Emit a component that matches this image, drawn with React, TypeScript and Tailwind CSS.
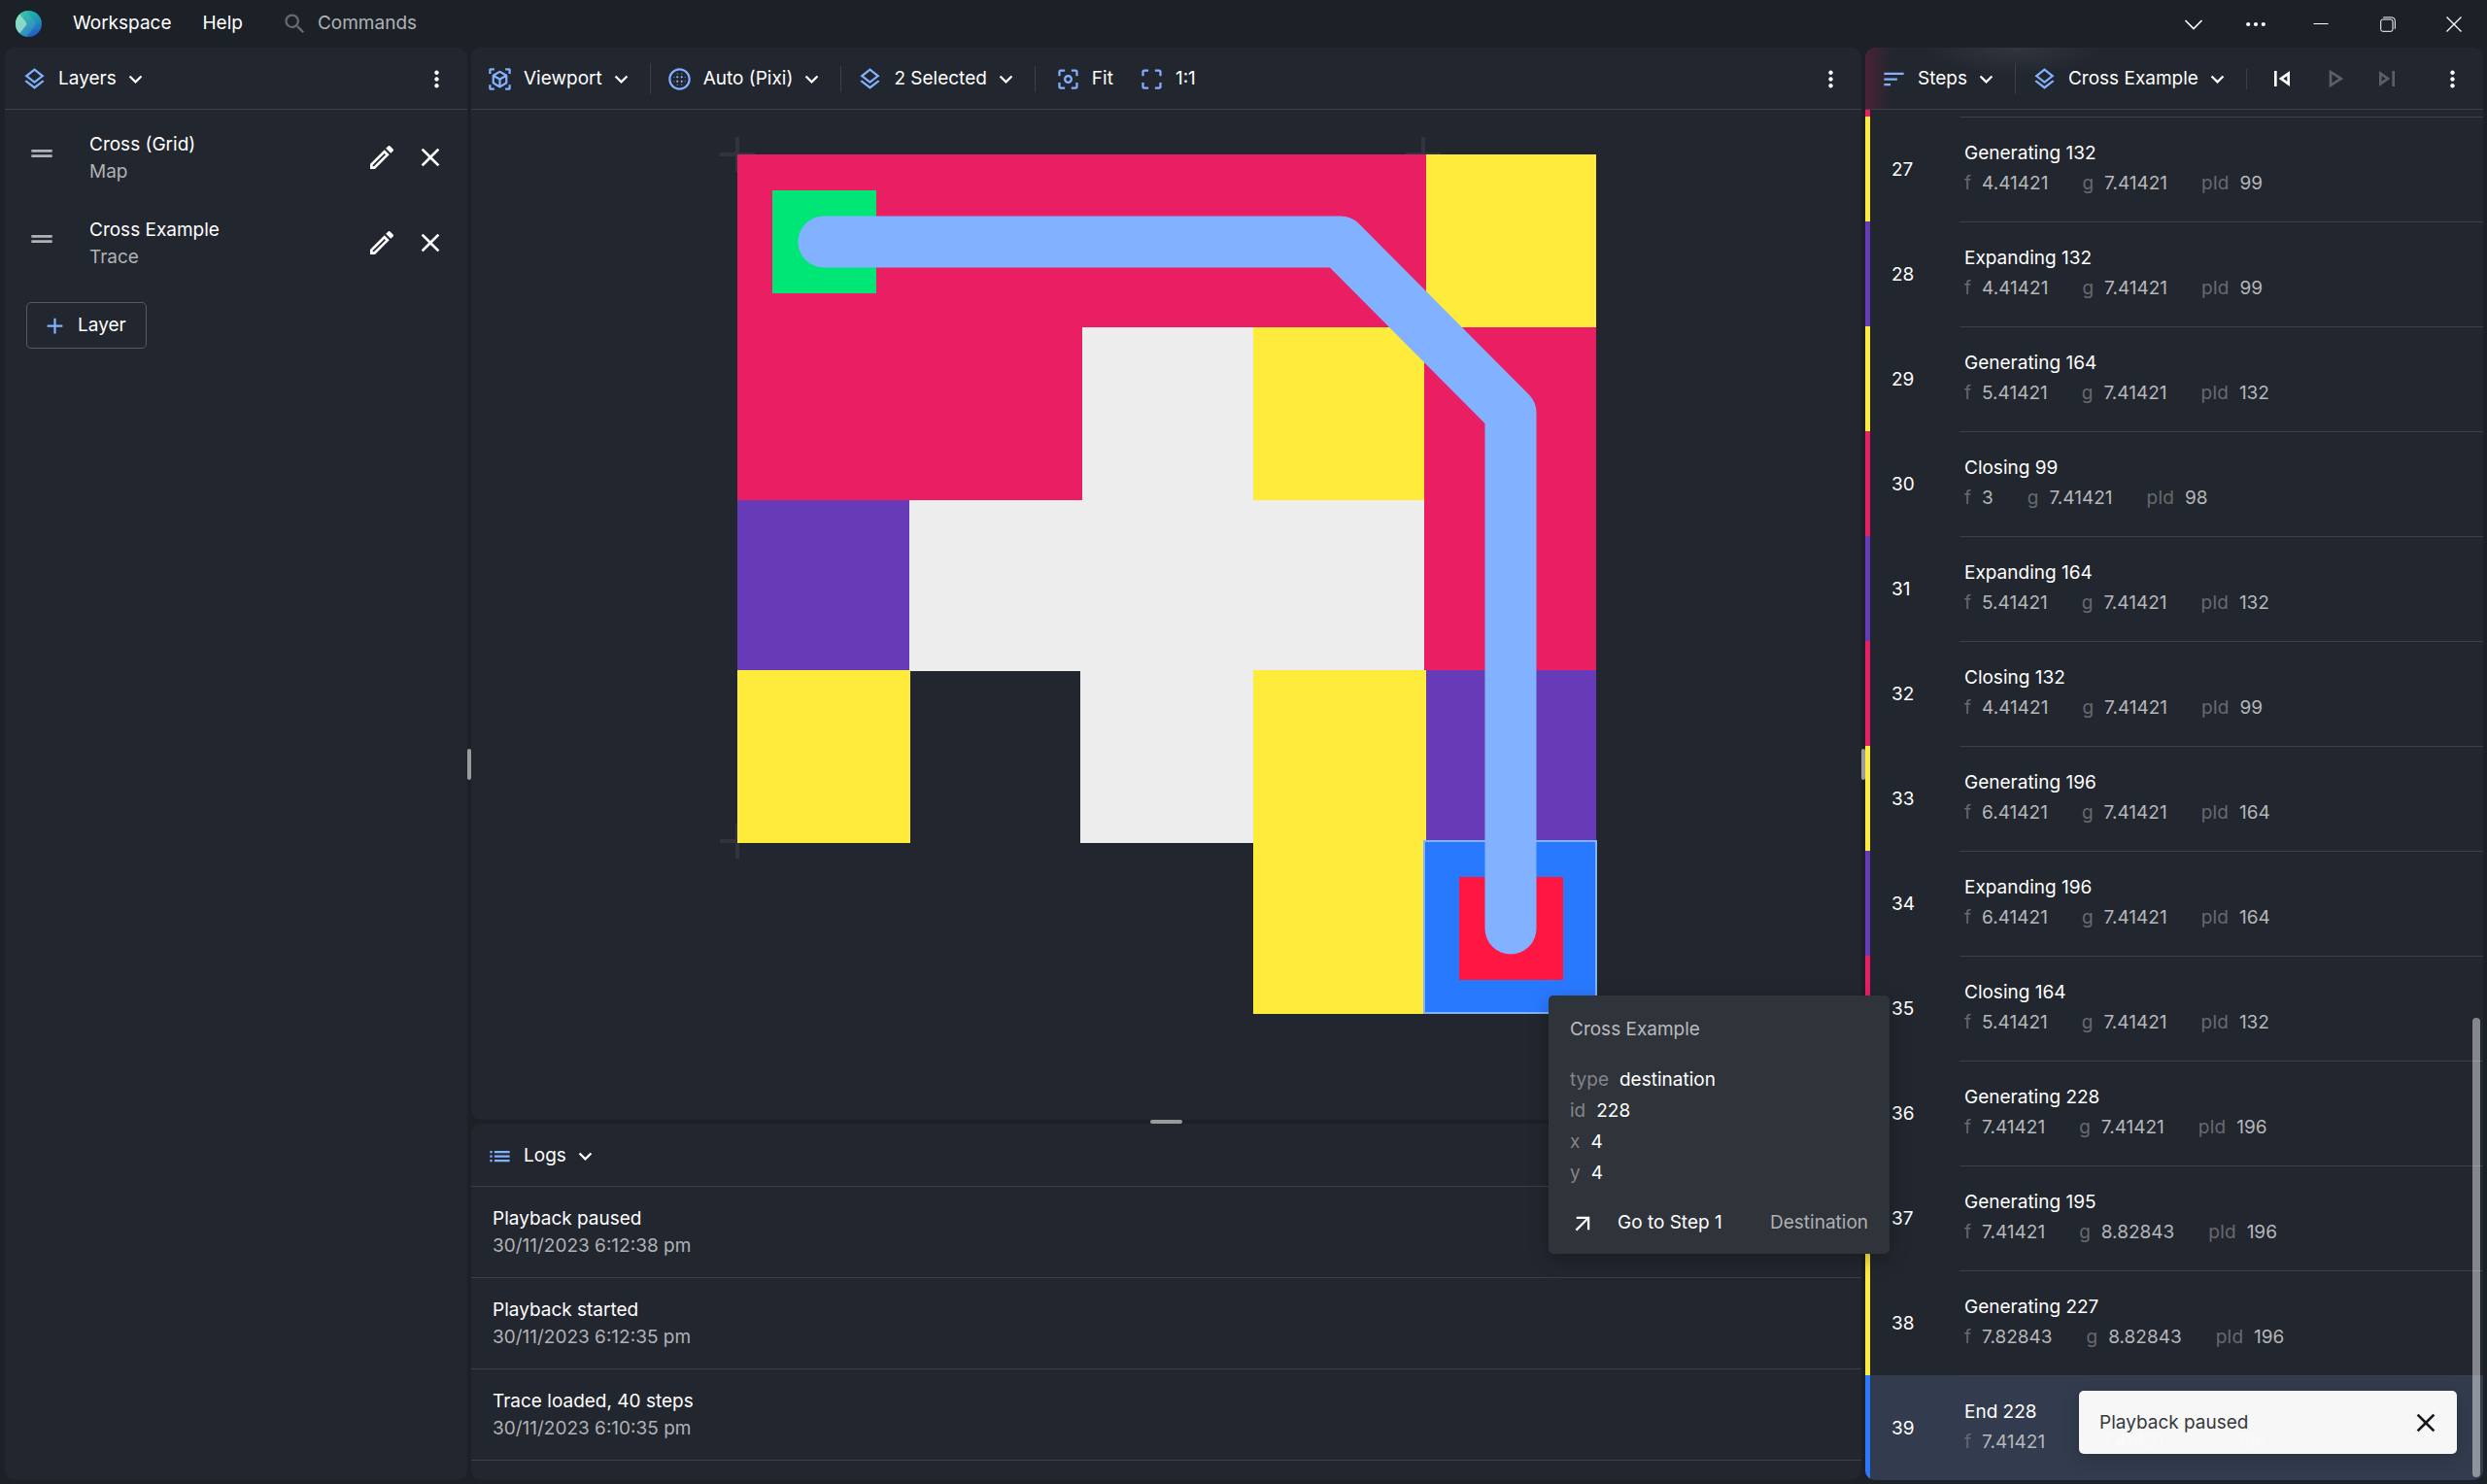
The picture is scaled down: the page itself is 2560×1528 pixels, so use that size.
import type { ReactNode } from "react";
import type { IconType } from "react-icons";
import {
  MdAdd,
  MdArrowOutward,
  MdBlurCircular,
  MdCenterFocusWeak,
  MdClose,
  MdCropFree,
  MdDragHandle,
  MdExpandMore,
  MdList,
  MdMoreVert,
  MdOutlineEdit,
  MdOutlineLayers,
  MdOutlinePlayArrow,
  MdOutlineSkipNext,
  MdOutlineSkipPrevious,
  MdSearch,
  MdSort,
  MdViewInAr,
} from "react-icons/md";

type Step = { n: number; title: string; f: string; g: string; pId: string; bar: string };

const YELLOW = "bg-[#ffeb3b]";
const PURPLE = "bg-[#673ab7]";
const PINK = "bg-[#e91e63]";
const BLUE = "bg-[#2979ff]";

const steps: Step[] = [
  { n: 27, title: "Generating 132", f: "4.41421", g: "7.41421", pId: "99", bar: YELLOW },
  { n: 28, title: "Expanding 132", f: "4.41421", g: "7.41421", pId: "99", bar: PURPLE },
  { n: 29, title: "Generating 164", f: "5.41421", g: "7.41421", pId: "132", bar: YELLOW },
  { n: 30, title: "Closing 99", f: "3", g: "7.41421", pId: "98", bar: PINK },
  { n: 31, title: "Expanding 164", f: "5.41421", g: "7.41421", pId: "132", bar: PURPLE },
  { n: 32, title: "Closing 132", f: "4.41421", g: "7.41421", pId: "99", bar: PINK },
  { n: 33, title: "Generating 196", f: "6.41421", g: "7.41421", pId: "164", bar: YELLOW },
  { n: 34, title: "Expanding 196", f: "6.41421", g: "7.41421", pId: "164", bar: PURPLE },
  { n: 35, title: "Closing 164", f: "5.41421", g: "7.41421", pId: "132", bar: PINK },
  { n: 36, title: "Generating 228", f: "7.41421", g: "7.41421", pId: "196", bar: YELLOW },
  { n: 37, title: "Generating 195", f: "7.41421", g: "8.82843", pId: "196", bar: YELLOW },
  { n: 38, title: "Generating 227", f: "7.82843", g: "8.82843", pId: "196", bar: YELLOW },
  { n: 39, title: "End 228", f: "7.41421", g: "7.41421", pId: "196", bar: BLUE },
];

const logs = [
  { title: "Playback paused", time: "30/11/2023 6:12:38 pm" },
  { title: "Playback started", time: "30/11/2023 6:12:35 pm" },
  { title: "Trace loaded, 40 steps", time: "30/11/2023 6:10:35 pm" },
];

const layers = [
  { name: "Cross (Grid)", kind: "Map" },
  { name: "Cross Example", kind: "Trace" },
];

function Logo() {
  return (
    <svg viewBox="0 0 27 27" className="size-[27px]" aria-hidden="true">
      <defs>
        <linearGradient id="logo-base" x1="0.4" y1="0" x2="0.8" y2="1">
          <stop offset="0" stopColor="#16c2a3" />
          <stop offset="0.5" stopColor="#1f8fb8" />
          <stop offset="1" stopColor="#2454c8" />
        </linearGradient>
        <linearGradient id="logo-mid" x1="0" y1="0" x2="0.6" y2="1">
          <stop offset="0" stopColor="#3fd0a6" />
          <stop offset="1" stopColor="#2f86c4" />
        </linearGradient>
        <linearGradient id="logo-front" x1="0" y1="0" x2="0.3" y2="1">
          <stop offset="0" stopColor="#86e2b4" />
          <stop offset="1" stopColor="#8fd0d0" />
        </linearGradient>
        <clipPath id="logo-clip">
          <circle cx="13.5" cy="13.5" r="13.5" />
        </clipPath>
      </defs>
      <g clipPath="url(#logo-clip)">
        <rect width="27" height="27" fill="url(#logo-base)" />
        <path d="M0 0H11L19.5 10.5Q21.5 13.5 19.5 16.5L11 27H0Z" fill="url(#logo-mid)" />
        <path d="M0 0L3 2L10.5 11.5Q12 13.5 10.5 15.5L3 25L0 27Z" fill="url(#logo-front)" />
      </g>
    </svg>
  );
}

function IconButton({ icon: Icon, label, dim, size = "lg" }: { icon: IconType; label: string; dim?: boolean; size?: "sm" | "lg" }) {
  return (
    <button type="button" aria-label={label} className={dim ? "text-[#5c5f65]" : "text-white"}>
      <Icon className={size === "lg" ? "size-8" : "size-[27px]"} />
    </button>
  );
}

function HeaderButton({ icon: Icon, children, menu }: { icon: IconType; children: ReactNode; menu?: boolean }) {
  return (
    <button type="button" className="flex items-center whitespace-nowrap">
      <Icon className="mr-[11px] size-[27px] text-[#82b1ff]" />
      {children}
      {menu && <MdExpandMore className="ml-[6px] size-[27px]" />}
    </button>
  );
}

function Divider({ className }: { className: string }) {
  return <span className={`w-px bg-[#3b3f46] ${className}`} />;
}

function PanelHeader({ children, className = "" }: { children: ReactNode; className?: string }) {
  return (
    <header className={`flex h-16 shrink-0 items-center border-b border-[#3b3f46] pl-4 pr-[18px] pt-px ${className}`}>{children}</header>
  );
}

function Panel({ children, className = "", label }: { children: ReactNode; className?: string; label: string }) {
  return (
    <section aria-label={label} className={`flex min-h-0 min-w-0 flex-col overflow-hidden rounded-[10px] bg-[#22262e] ${className}`}>
      {children}
    </section>
  );
}

function Field({ name, value }: { name: string; value: string }) {
  return (
    <span className="flex gap-[11px]">
      <span className="text-[#66696e]">{name}</span>
      <span className="text-[#b5b7ba]">{value}</span>
    </span>
  );
}

function TitleBar() {
  return (
    <header className="flex h-12 shrink-0 items-center pl-4 pt-px">
      <Logo />
      <nav className="ml-8 flex gap-8">
        <button type="button">Workspace</button>
        <button type="button">Help</button>
      </nav>
      <button type="button" className="ml-10 flex items-center gap-[10px] text-[#b0b2b5]">
        <MdSearch className="size-[27px] text-[#686b70]" />
        Commands
      </button>
      <div className="ml-auto flex items-center">
        <button type="button" aria-label="Show more" className="flex w-16 justify-center">
          <svg viewBox="0 0 20 12" className="h-3 w-5 fill-none stroke-white stroke-[1.6]">
            <path d="M1.5 2L10 10.5L18.5 2" />
          </svg>
        </button>
        <button type="button" aria-label="Options" className="flex w-16 justify-center">
          <svg viewBox="0 0 20 6" className="h-[6px] w-5 fill-white">
            <circle cx="2.2" cy="3" r="2.1" />
            <circle cx="10" cy="3" r="2.1" />
            <circle cx="17.8" cy="3" r="2.1" />
          </svg>
        </button>
        <button type="button" aria-label="Minimise" className="flex w-[70px] justify-center">
          <svg viewBox="0 0 16 16" className="size-4 stroke-white">
            <path d="M0.5 7.5H15.5" />
          </svg>
        </button>
        <button type="button" aria-label="Restore" className="flex w-[68px] justify-center">
          <svg viewBox="0 0 16 16" className="size-4 fill-none stroke-white">
            <rect x="0.7" y="3" width="12.3" height="12.3" rx="2" />
            <path d="M3.2 0.9H12Q15.3 0.9 15.3 4.2V12.8" />
          </svg>
        </button>
        <button type="button" aria-label="Close" className="flex w-[68px] justify-center">
          <svg viewBox="0 0 16 16" className="size-4 stroke-white stroke-[1.3]">
            <path d="M0.5 0.5L15.5 15.5M15.5 0.5L0.5 15.5" />
          </svg>
        </button>
      </div>
    </header>
  );
}

function LayersPanel() {
  return (
    <Panel label="Layers">
      <PanelHeader className="pl-[17px]">
        <HeaderButton icon={MdOutlineLayers} menu>
          Layers
        </HeaderButton>
        <div className="ml-auto flex">
          <IconButton icon={MdMoreVert} label="Layers menu" size="sm" />
        </div>
      </PanelHeader>
      <ul className="pt-[5px]">
        {layers.map((l) => (
          <li key={l.name} className="flex h-[88px] items-center px-[22px]">
            <MdDragHandle className="mb-2 size-8 text-[#b0b2b5]" />
            <div className="ml-[33px] pt-[2px] leading-7">
              <div>{l.name}</div>
              <div className="text-[#b0b2b5]">{l.kind}</div>
            </div>
            <div className="ml-auto flex gap-[18px]">
              <IconButton icon={MdOutlineEdit} label={`Edit ${l.name}`} />
              <IconButton icon={MdClose} label={`Remove ${l.name}`} />
            </div>
          </li>
        ))}
      </ul>
      <button type="button" className="ml-[22px] mt-[17px] flex h-12 w-[124px] items-center gap-[10px] rounded-[5px] border border-[#565a60] pl-[15px]">
        <MdAdd className="size-[27px] text-[#82b1ff]" />
        Layer
      </button>
    </Panel>
  );
}

function Scene() {
  return (
    <svg viewBox="485 113 1431 1040" className="block size-full" role="img" aria-label="Grid with path">
      <g className="stroke-[#31343c]" strokeWidth="4">
        <path d="M759 141V177M741 159H777" />
        <path d="M1465 141V177M1447 159H1483" />
        <path d="M759 848V884M741 866H777" />
      </g>
      <g fill="#ededed">
        <rect x="1114" y="337" width="177" height="178" />
        <rect x="936" y="515" width="530" height="176" />
        <rect x="1112" y="690" width="178" height="178" />
      </g>
      <g fill="#e91e63">
        <rect x="759" y="159" width="709" height="178" />
        <rect x="759" y="336" width="355" height="179" />
        <rect x="1466" y="337" width="177" height="354" />
      </g>
      <g fill="#673ab7">
        <rect x="759" y="515" width="177" height="176" />
        <rect x="1467" y="690" width="176" height="178" />
      </g>
      <g fill="#ffeb3b">
        <rect x="1468" y="159" width="175" height="178" />
        <rect x="1290" y="337" width="176" height="178" />
        <rect x="759" y="690" width="178" height="178" />
        <rect x="1290" y="690" width="178" height="354" />
      </g>
      <rect x="795" y="196" width="107" height="106" fill="#00e676" />
      <rect x="1466" y="866" width="177" height="177" fill="#2979ff" stroke="#82b1ff" strokeWidth="2" />
      <rect x="1502" y="903" width="107" height="106" fill="#ff1744" />
      <path d="M848 249H1380L1555 425V956" fill="none" stroke="#82b1ff" strokeWidth="53" strokeLinecap="round" strokeLinejoin="round" />
    </svg>
  );
}

function ViewportPanel() {
  return (
    <Panel label="Viewport" className="flex-1">
      <PanelHeader>
        <HeaderButton icon={MdViewInAr} menu>
          Viewport
        </HeaderButton>
        <Divider className="mx-4 h-8" />
        <HeaderButton icon={MdBlurCircular} menu>
          Auto (Pixi)
        </HeaderButton>
        <Divider className="mx-4 h-[27px]" />
        <HeaderButton icon={MdOutlineLayers} menu>
          2 Selected
        </HeaderButton>
        <Divider className="ml-4 mr-5 h-[27px]" />
        <HeaderButton icon={MdCenterFocusWeak}>Fit</HeaderButton>
        <span className="w-[26px]" />
        <HeaderButton icon={MdCropFree}>1:1</HeaderButton>
        <div className="ml-auto flex">
          <IconButton icon={MdMoreVert} label="Viewport menu" size="sm" />
        </div>
      </PanelHeader>
      <div className="min-h-0 flex-1">
        <Scene />
      </div>
    </Panel>
  );
}

function LogsPanel() {
  return (
    <Panel label="Logs" className="h-[367px] shrink-0 pt-px">
      <PanelHeader>
        <HeaderButton icon={MdList} menu>
          Logs
        </HeaderButton>
      </PanelHeader>
      <ul>
        {logs.map((l) => (
          <li key={l.time} className="flex h-[94px] flex-col justify-center border-b border-[#3b3f46] px-[22px] leading-7">
            <div>{l.title}</div>
            <div className="text-[#b0b2b5]">{l.time}</div>
          </li>
        ))}
      </ul>
    </Panel>
  );
}

function StepRow({ step, active }: { step: Step; active: boolean }) {
  return (
    <li className={active ? "flex h-[108px] shrink-0 bg-[#323c4e]" : "flex h-[108px] shrink-0"}>
      <span className={`w-[5px] ${step.bar}`} />
      <span className="flex w-[92px] items-center pl-[22px] pt-[2px]">{step.n}</span>
      <div className="flex flex-1 flex-col justify-center gap-[3px] border-t border-[#3b3f46] pb-[3px] pl-[5px] leading-7">
        <div>{step.title}</div>
        <div className="flex gap-[35px]">
          <Field name="f" value={step.f} />
          <Field name="g" value={step.g} />
          <Field name="pId" value={step.pId} />
        </div>
      </div>
    </li>
  );
}

function StepsPanel() {
  return (
    <Panel label="Steps" className="relative">
      <PanelHeader className="bg-[radial-gradient(ellipse_90px_28px_at_155px_0px,#31353d,transparent),linear-gradient(90deg,#4a2238,#22262e_28px)]">
        <HeaderButton icon={MdSort} menu>
          Steps
        </HeaderButton>
        <Divider className="mx-4 h-8" />
        <HeaderButton icon={MdOutlineLayers} menu>
          Cross Example
        </HeaderButton>
        <Divider className="mx-4 h-[21px]" />
        <div className="ml-1 flex gap-[22px]">
          <IconButton icon={MdOutlineSkipPrevious} label="Previous step" />
          <IconButton icon={MdOutlinePlayArrow} label="Play" dim />
          <IconButton icon={MdOutlineSkipNext} label="Next step" dim />
        </div>
        <div className="ml-auto flex">
          <IconButton icon={MdMoreVert} label="Steps menu" size="sm" />
        </div>
      </PanelHeader>
      <ul className="flex min-h-0 flex-1 flex-col">
        <li className="flex flex-1">
          <span className="w-[5px] bg-[#e91e63]" />
        </li>
        {steps.map((s) => (
          <StepRow key={s.n} step={s} active={s.n === 39} />
        ))}
      </ul>
      <div className="absolute bottom-[3px] right-[3px] h-[473px] w-2 rounded-full bg-white/45" />
    </Panel>
  );
}

function TooltipRow({ name, value }: { name: string; value: string }) {
  return (
    <div className="flex gap-[11px] leading-8">
      <dt className="text-[#82858a]">{name}</dt>
      <dd>{value}</dd>
    </div>
  );
}

function CellTooltip() {
  return (
    <div
      role="tooltip"
      className="absolute left-[1594px] top-[1025px] flex h-[266px] w-[351px] flex-col rounded-[5px] bg-[#2f333a] px-[22px] pt-[19px] shadow-[0_6px_20px_rgba(0,0,0,0.25)]"
    >
      <div className="leading-8 text-[#b9bbbe]">Cross Example</div>
      <dl className="mt-5">
        <TooltipRow name="type" value="destination" />
        <TooltipRow name="id" value="228" />
        <TooltipRow name="x" value="4" />
        <TooltipRow name="y" value="4" />
      </dl>
      <button type="button" className="mt-[19px] flex items-center leading-8">
        <MdArrowOutward className="size-[27px]" />
        <span className="ml-[22px]">Go to Step 1</span>
        <span className="ml-auto text-[#aeb0b4]">Destination</span>
      </button>
    </div>
  );
}

function Toast() {
  return (
    <div
      role="status"
      className="absolute bottom-[31px] right-[31px] flex h-[65px] w-[389px] items-center rounded-[5px] bg-[#fbfbfb]/98 pl-[21px] pr-[16px] text-[#35383d] shadow-[0_4px_16px_rgba(0,0,0,0.2)]"
    >
      <span className="pt-px">Playback paused</span>
      <button type="button" aria-label="Dismiss" className="ml-auto text-[#15181c]">
        <MdClose className="size-8" />
      </button>
    </div>
  );
}

export default function App() {
  return (
    <div className="relative flex h-screen flex-col overflow-hidden bg-[#1c2027] font-[Inter,sans-serif] text-[19px] text-white">
      <TitleBar />
      <main className="grid min-h-0 flex-1 grid-cols-[476px_4px_1fr_4px_636px] pb-1 pl-[5px] pr-1 pt-px">
        <LayersPanel />
        <span className="my-auto h-8 w-1 rounded-full bg-[#999b9e]" />
        <div className="flex min-h-0 min-w-0 flex-col">
          <ViewportPanel />
          <span className="mx-auto h-1 w-[33px] shrink-0 rounded-full bg-[#999b9e]" />
          <LogsPanel />
        </div>
        <span className="my-auto h-8 w-1 rounded-full bg-[#999b9e]" />
        <StepsPanel />
      </main>
      <CellTooltip />
      <Toast />
    </div>
  );
}
